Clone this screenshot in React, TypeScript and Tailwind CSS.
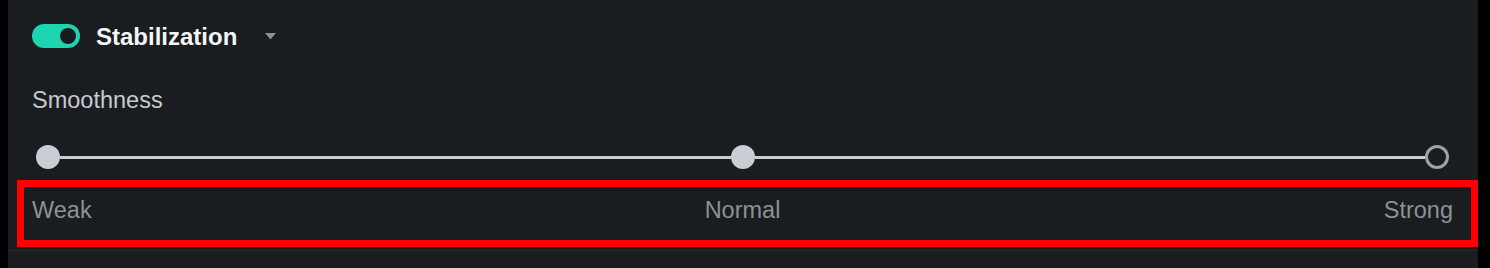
import React from 'react';

const font = { fontFamily: '"Liberation Sans", Arial, sans-serif' };

function Toggle() {
  return (
    <div className="flex h-[24px] w-[48px] items-center justify-end rounded-full bg-[#1cd6b1] pr-[4px]">
      <div className="h-[16px] w-[16px] rounded-full bg-[#181c1f]" />
    </div>
  );
}

function Knob({ hollow = false }: { hollow?: boolean }) {
  if (hollow) {
    return <div className="h-[24px] w-[24px] shrink-0 rounded-full border-[3px] border-[#9ea2a7] bg-[#191d20]" />;
  }
  return <div className="h-[24px] w-[24px] shrink-0 rounded-full bg-[#c9ced4]" />;
}

export default function App() {
  return (
    <div className="flex h-[268px] w-[1490px] bg-black" style={font}>
      <div className="relative ml-[8px] flex w-[1470px] flex-col bg-[#191d20]">
        {/* header */}
        <div className="mt-[24px] flex h-[24px] items-center pl-[24px]">
          <Toggle />
          <span className="ml-[16px] pt-[2px] text-[24px] font-bold leading-none text-[#f3f5f6]">Stabilization</span>
          <svg className="ml-[28px]" width="11" height="7" viewBox="0 0 11 7">
            <path d="M0 0 H11 L5.5 6.5 Z" fill="#8e9196" />
          </svg>
        </div>

        <div className="mt-[38px] pl-[24px] text-[23.5px] leading-[28px] text-[#c7cbd0]">Smoothness</div>

        {/* slider */}
        <div className="mt-[31px] flex h-[24px] items-center pl-[28px] pr-[29px]">
          <Knob />
          <div className="h-[3px] flex-1 bg-[#c9ced4]" />
          <Knob />
          <div className="h-[3px] flex-1 bg-[#c9ced4]" />
          <Knob hollow />
        </div>

        <div className="mt-[27px] grid grid-cols-3 pl-[24px] pr-[25px] text-[23.5px] leading-[28px] text-[#8c9196]">
          <span>Weak</span>
          <span className="text-center">Normal</span>
          <span className="text-right">Strong</span>
        </div>

        <div className="mt-[26px] h-px bg-[#262a2e]" />

        {/* annotation box */}
        <div className="pointer-events-none absolute left-[9px] top-[180px] h-[67px] w-[1461px] border-[7px] border-[#ff0000]" />
      </div>
    </div>
  );
}
